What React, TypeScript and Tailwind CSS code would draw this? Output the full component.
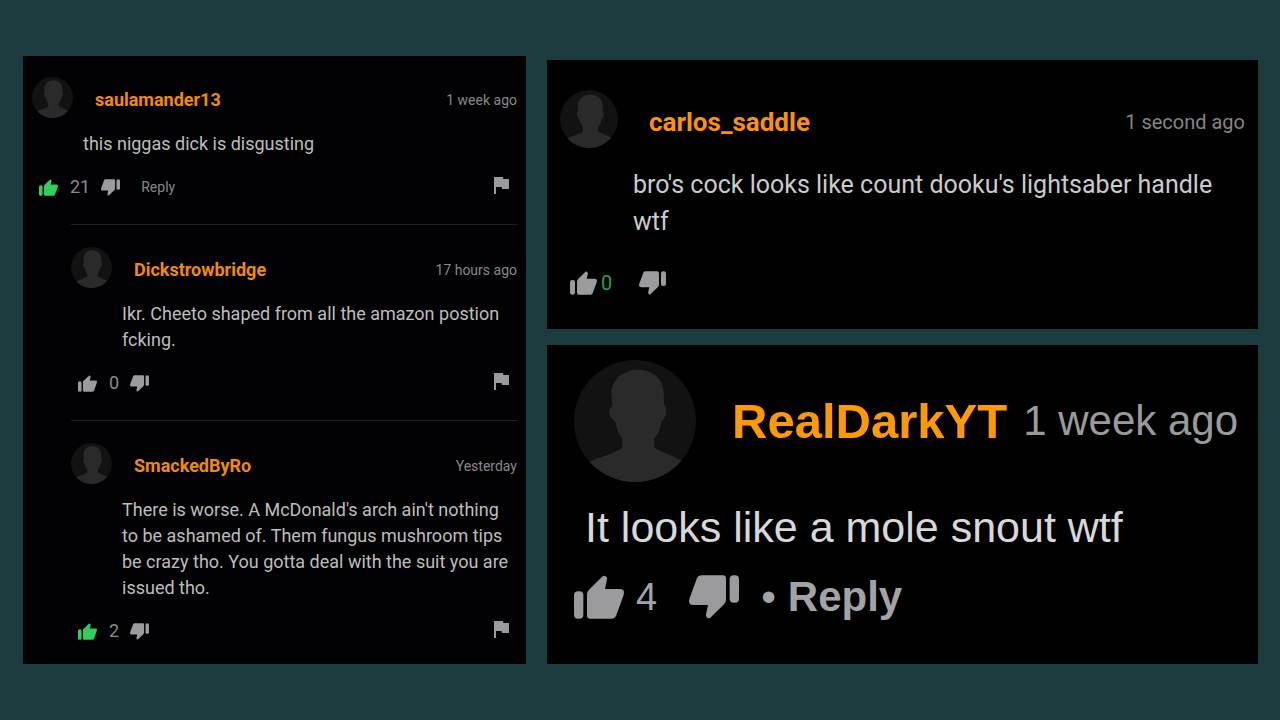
type Size = "sm" | "md" | "lg";

const avatarSize: Record<Size, string> = {
  sm: "size-[41px]",
  md: "size-[58px]",
  lg: "size-[122px]",
};

const thumbSize: Record<Size, string> = {
  sm: "w-[19px] h-[17px]",
  md: "w-[27px] h-[24px]",
  lg: "w-[50px] h-[44px]",
};

function Avatar({ size }: { size: Size }) {
  return (
    <svg viewBox="43 31 364 364" className={`${avatarSize[size]} shrink-0`} aria-hidden="true">
      <circle cx="225" cy="213" r="182" fill="#121212" />
      <path
        fill="#2a2a2a"
        d="M158 165 L154 128 C160 82 195 60 233 60 C275 60 306 84 310 122 L312 165 C323 172 320 206 304 213 C300 238 294 252 282 266 L282 292 C300 306 340 315 364 331 A182 182 0 0 1 90 335 C120 319 175 307 187 292 L187 265 C174 248 170 236 167 216 C145 202 143 176 158 165 Z"
      />
    </svg>
  );
}

function Thumb({ size, down, active }: { size: Size; down?: boolean; active?: boolean }) {
  return (
    <button
      type="button"
      aria-label={down ? "Dislike" : "Like"}
      className={`shrink-0 ${active ? "text-[#36cc5c]" : "text-[#9b9a9c]"}`}
    >
      <svg
        viewBox="0 0 150 130"
        fill="currentColor"
        className={`block ${thumbSize[size]} ${down ? "rotate-180" : ""}`}
        aria-hidden="true"
      >
        <rect x="0" y="48" width="28" height="82" rx="12" />
        <path d="M39 57 Q39 49 45 43 L86 3 Q90 -1 95 3 L98 6 Q100 9 99 13 L93 41 H138 Q150 41 150 52 L148 62 L126 122 Q122 130 114 130 H48 Q39 130 39 121 Z" />
      </svg>
    </button>
  );
}

function Flag() {
  return (
    <button type="button" aria-label="Report" className="mr-2 mb-1 ml-auto text-[#9b9a9c]">
      <svg viewBox="5 4 15 17" fill="currentColor" className="block h-[17px] w-[15px]" aria-hidden="true">
        <path d="M14.4 6 14 4H5v17h2v-7h5.6l.4 2h7V6z" />
      </svg>
    </button>
  );
}

type CommentProps = {
  author: string;
  time: string;
  text: string;
  likes: number;
  liked?: boolean;
  reply?: boolean;
};

function Comment({ author, time, text, likes, liked, reply }: CommentProps) {
  return (
    <article>
      <header className="flex items-end">
        <Avatar size="sm" />
        <a href="#" className="ml-[22px] text-[18px] leading-[36px] font-bold text-[#f08c0c]">
          {author}
        </a>
        <time className="ml-auto text-[14px] leading-[36px] text-[#88878a]">{time}</time>
      </header>
      <p className="mt-[13px] ml-[51px] text-[18px] leading-[26px] text-[#bdbdbd]">{text}</p>
      <div className="mt-[18px] ml-[7px] flex h-6 items-center">
        <Thumb size="sm" active={liked} />
        <span className="ml-3 text-[18px] leading-6 text-[#8b8a8d]">{likes}</span>
        <span className="ml-[11px] flex">
          <Thumb size="sm" down />
        </span>
        {reply && (
          <button type="button" className="ml-[21px] text-[14px] leading-6 text-[#88878a]">
            Reply
          </button>
        )}
        <Flag />
      </div>
    </article>
  );
}

export default function App() {
  return (
    <main className="min-h-screen bg-[#1c3b3f] py-14 pr-[22px] pl-[23px] font-[Roboto,sans-serif]">
      <div className="grid grid-cols-[503fr_711fr] gap-x-[21px]">
        <section className="bg-[#020104] pt-[21px] pr-[9px] pb-[21px] pl-[9px]">
          <Comment
            author="saulamander13"
            time="1 week ago"
            text="this niggas dick is disgusting"
            likes={21}
            liked
            reply
          />
          <div className="mt-[25px] ml-[39px] border-t border-[#1f1f20] pt-[22px]">
            <Comment
              author="Dickstrowbridge"
              time="17 hours ago"
              text="Ikr. Cheeto shaped from all the amazon postion fcking."
              likes={0}
            />
          </div>
          <div className="mt-[25px] ml-[39px] border-t border-[#1f1f20] pt-[22px]">
            <Comment
              author="SmackedByRo"
              time="Yesterday"
              text="There is worse. A McDonald's arch ain't nothing to be ashamed of. Them fungus mushroom tips be crazy tho. You gotta deal with the suit you are issued tho."
              likes={2}
              liked
            />
          </div>
        </section>

        <div className="flex flex-col gap-4 pt-1">
          <article className="bg-[#010102] pt-[30px] pr-[13px] pb-[32px] pl-[13px]">
            <header className="flex items-end">
              <Avatar size="md" />
              <a href="#" className="ml-[31px] text-[26px] leading-[52px] font-bold text-[#fa930a]">
                carlos_saddle
              </a>
              <time className="ml-auto text-[20px] leading-[52px] text-[#858487]">1 second ago</time>
            </header>
            <p className="mt-[18px] ml-[73px] text-[25px] leading-[37px] text-[#cbcbcb]">
              bro's cock looks like count dooku's lightsaber handle wtf
            </p>
            <div className="mt-[29px] ml-[10px] flex items-center">
              <Thumb size="md" />
              <span className="ml-1 text-[20px] leading-7 text-[#23a34a]">0</span>
              <span className="ml-[27px] flex">
                <Thumb size="md" down />
              </span>
            </div>
          </article>

          <article className="grow bg-[#010102] pt-[15px] pr-[20px] pb-[35px] pl-[27px] font-['Liberation_Sans',Arial,sans-serif]">
            <header className="flex items-center">
              <Avatar size="lg" />
              <a href="#" className="ml-[36px] text-[49px] leading-[60px] font-bold text-[#ff9900]">
                RealDarkYT
              </a>
              <time className="ml-auto text-[42px] leading-[56px] text-[#9a9a9c]">1 week ago</time>
            </header>
            <p className="mt-[20px] ml-[11px] text-[43px] leading-[50px] text-[#d8d8d8]">
              It looks like a mole snout wtf
            </p>
            <div className="mt-[20px] flex items-center text-[#a3a3a5]">
              <Thumb size="lg" />
              <span className="ml-3 text-[38px] leading-[50px]">4</span>
              <span className="ml-8 flex">
                <Thumb size="lg" down />
              </span>
              <span className="ml-[22px] text-[42px] leading-[50px]">•</span>
              <button type="button" className="ml-3 text-[42px] leading-[50px] font-bold">
                Reply
              </button>
            </div>
          </article>
        </div>
      </div>
    </main>
  );
}
